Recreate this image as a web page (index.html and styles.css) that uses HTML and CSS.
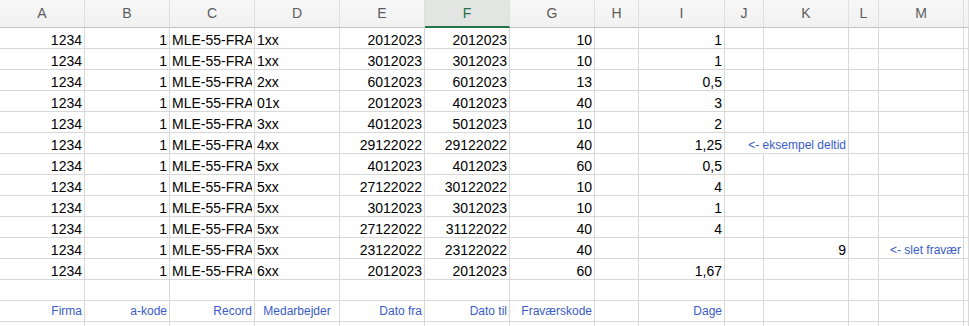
FILE: index.html
```html
<!DOCTYPE html>
<html lang="da">
<head>
<meta charset="utf-8">
<title>Fravær</title>
<link rel="stylesheet" href="styles.css">
</head>
<body>
<div class="sheet">
  <div class="row head">
    <div class="h">A</div><div class="h">B</div><div class="h">C</div><div class="h">D</div><div class="h">E</div><div class="h sel">F</div><div class="h">G</div><div class="h">H</div><div class="h">I</div><div class="h">J</div><div class="h">K</div><div class="h">L</div><div class="h">M</div><div class="h"></div>
  </div>

  <div class="row"><div class="c r">1234</div><div class="c r">1</div><div class="c"><span class="clip">MLE-55-FRAVÆR</span></div><div class="c">1xx</div><div class="c r">2012023</div><div class="c r">2012023</div><div class="c r">10</div><div class="c"></div><div class="c r">1</div><div class="c"></div><div class="c"></div><div class="c"></div><div class="c"></div><div class="c"></div></div>
  <div class="row"><div class="c r">1234</div><div class="c r">1</div><div class="c"><span class="clip">MLE-55-FRAVÆR</span></div><div class="c">1xx</div><div class="c r">3012023</div><div class="c r">3012023</div><div class="c r">10</div><div class="c"></div><div class="c r">1</div><div class="c"></div><div class="c"></div><div class="c"></div><div class="c"></div><div class="c"></div></div>
  <div class="row"><div class="c r">1234</div><div class="c r">1</div><div class="c"><span class="clip">MLE-55-FRAVÆR</span></div><div class="c">2xx</div><div class="c r">6012023</div><div class="c r">6012023</div><div class="c r">13</div><div class="c"></div><div class="c r">0,5</div><div class="c"></div><div class="c"></div><div class="c"></div><div class="c"></div><div class="c"></div></div>
  <div class="row"><div class="c r">1234</div><div class="c r">1</div><div class="c"><span class="clip">MLE-55-FRAVÆR</span></div><div class="c">01x</div><div class="c r">2012023</div><div class="c r">4012023</div><div class="c r">40</div><div class="c"></div><div class="c r">3</div><div class="c"></div><div class="c"></div><div class="c"></div><div class="c"></div><div class="c"></div></div>
  <div class="row"><div class="c r">1234</div><div class="c r">1</div><div class="c"><span class="clip">MLE-55-FRAVÆR</span></div><div class="c">3xx</div><div class="c r">4012023</div><div class="c r">5012023</div><div class="c r">10</div><div class="c"></div><div class="c r">2</div><div class="c"></div><div class="c"></div><div class="c"></div><div class="c"></div><div class="c"></div></div>
  <div class="row"><div class="c r">1234</div><div class="c r">1</div><div class="c"><span class="clip">MLE-55-FRAVÆR</span></div><div class="c">4xx</div><div class="c r">29122022</div><div class="c r">29122022</div><div class="c r">40</div><div class="c"></div><div class="c r">1,25</div><div class="c open"></div><div class="c r note spill">&lt;- eksempel deltid</div><div class="c"></div><div class="c"></div><div class="c"></div></div>
  <div class="row"><div class="c r">1234</div><div class="c r">1</div><div class="c"><span class="clip">MLE-55-FRAVÆR</span></div><div class="c">5xx</div><div class="c r">4012023</div><div class="c r">4012023</div><div class="c r">60</div><div class="c"></div><div class="c r">0,5</div><div class="c"></div><div class="c"></div><div class="c"></div><div class="c"></div><div class="c"></div></div>
  <div class="row"><div class="c r">1234</div><div class="c r">1</div><div class="c"><span class="clip">MLE-55-FRAVÆR</span></div><div class="c">5xx</div><div class="c r">27122022</div><div class="c r">30122022</div><div class="c r">10</div><div class="c"></div><div class="c r">4</div><div class="c"></div><div class="c"></div><div class="c"></div><div class="c"></div><div class="c"></div></div>
  <div class="row"><div class="c r">1234</div><div class="c r">1</div><div class="c"><span class="clip">MLE-55-FRAVÆR</span></div><div class="c">5xx</div><div class="c r">3012023</div><div class="c r">3012023</div><div class="c r">10</div><div class="c"></div><div class="c r">1</div><div class="c"></div><div class="c"></div><div class="c"></div><div class="c"></div><div class="c"></div></div>
  <div class="row"><div class="c r">1234</div><div class="c r">1</div><div class="c"><span class="clip">MLE-55-FRAVÆR</span></div><div class="c">5xx</div><div class="c r">27122022</div><div class="c r">31122022</div><div class="c r">40</div><div class="c"></div><div class="c r">4</div><div class="c"></div><div class="c"></div><div class="c"></div><div class="c"></div><div class="c"></div></div>
  <div class="row"><div class="c r">1234</div><div class="c r">1</div><div class="c"><span class="clip">MLE-55-FRAVÆR</span></div><div class="c">5xx</div><div class="c r">23122022</div><div class="c r">23122022</div><div class="c r">40</div><div class="c"></div><div class="c r"></div><div class="c"></div><div class="c r">9</div><div class="c"></div><div class="c r note">&lt;- slet fravær</div><div class="c"></div></div>
  <div class="row"><div class="c r">1234</div><div class="c r">1</div><div class="c"><span class="clip">MLE-55-FRAVÆR</span></div><div class="c">6xx</div><div class="c r">2012023</div><div class="c r">2012023</div><div class="c r">60</div><div class="c"></div><div class="c r">1,67</div><div class="c"></div><div class="c"></div><div class="c"></div><div class="c"></div><div class="c"></div></div>
  <div class="row"><div class="c"></div><div class="c"></div><div class="c"></div><div class="c"></div><div class="c"></div><div class="c"></div><div class="c"></div><div class="c"></div><div class="c"></div><div class="c"></div><div class="c"></div><div class="c"></div><div class="c"></div><div class="c"></div></div>
  <div class="row labels"><div class="c r lbl">Firma</div><div class="c r lbl">a-kode</div><div class="c r lbl">Record</div><div class="c m lbl">Medarbejder</div><div class="c r lbl">Dato fra</div><div class="c r lbl">Dato til</div><div class="c r lbl">Fraværskode</div><div class="c"></div><div class="c r lbl">Dage</div><div class="c"></div><div class="c"></div><div class="c"></div><div class="c"></div><div class="c"></div></div>
  <div class="row"><div class="c"></div><div class="c"></div><div class="c"></div><div class="c"></div><div class="c"></div><div class="c"></div><div class="c"></div><div class="c"></div><div class="c"></div><div class="c"></div><div class="c"></div><div class="c"></div><div class="c"></div><div class="c"></div></div>
</div>
</body>
</html>
```

FILE: styles.css
```css
html, body {
  margin: 0;
  padding: 0;
  background: #ffffff;
  overflow: hidden;
}

.sheet {
  width: 969px;
  height: 326px;
  overflow: hidden;
  font-family: "Liberation Sans", Arial, sans-serif;
  font-size: 14px;
  color: #000000;
}

.row {
  display: grid;
  grid-template-columns: 85px 85px 85px 85px 85px 85px 85px 44px 86px 39px 85px 30px 85px 1fr;
  height: 21px;
}

.row.head {
  height: 28px;
  background: linear-gradient(#f7f7f7, #f1f1f1);
}

.h {
  box-sizing: border-box;
  border-right: 1px solid #e0e0e0;
  border-bottom: 1px solid #c4c4c4;
  text-align: center;
  line-height: 27px;
  color: #5c5c5c;
  font-size: 14px;
}

.h.sel {
  background: #e3e5e3;
  color: #217346;
  border-bottom: 2px solid #217346;
  line-height: 26px;
}

.c {
  box-sizing: border-box;
  border-right: 1px solid #d8d8d8;
  border-bottom: 1px solid #d8d8d8;
  display: flex;
  align-items: flex-end;
  justify-content: flex-start;
  padding: 0 2px 0 2px;
  line-height: 16px;
  white-space: nowrap;
  overflow: hidden;
  min-width: 0;
}

.clip {
  display: block;
  min-width: 0;
  max-width: 100%;
  overflow: hidden;
  white-space: nowrap;
}

.c.r {
  justify-content: flex-end;
}

.c.m {
  justify-content: center;
}

.note {
  color: #3a5cc6;
  font-size: 12px;
  line-height: 14px;
  padding-bottom: 1px;
}

.c.open {
  border-right-color: transparent;
}

.c.spill {
  overflow: visible;
}

.lbl {
  color: #3a5cc6;
  font-size: 12px;
  line-height: 14px;
  padding-bottom: 3px;
}
```
